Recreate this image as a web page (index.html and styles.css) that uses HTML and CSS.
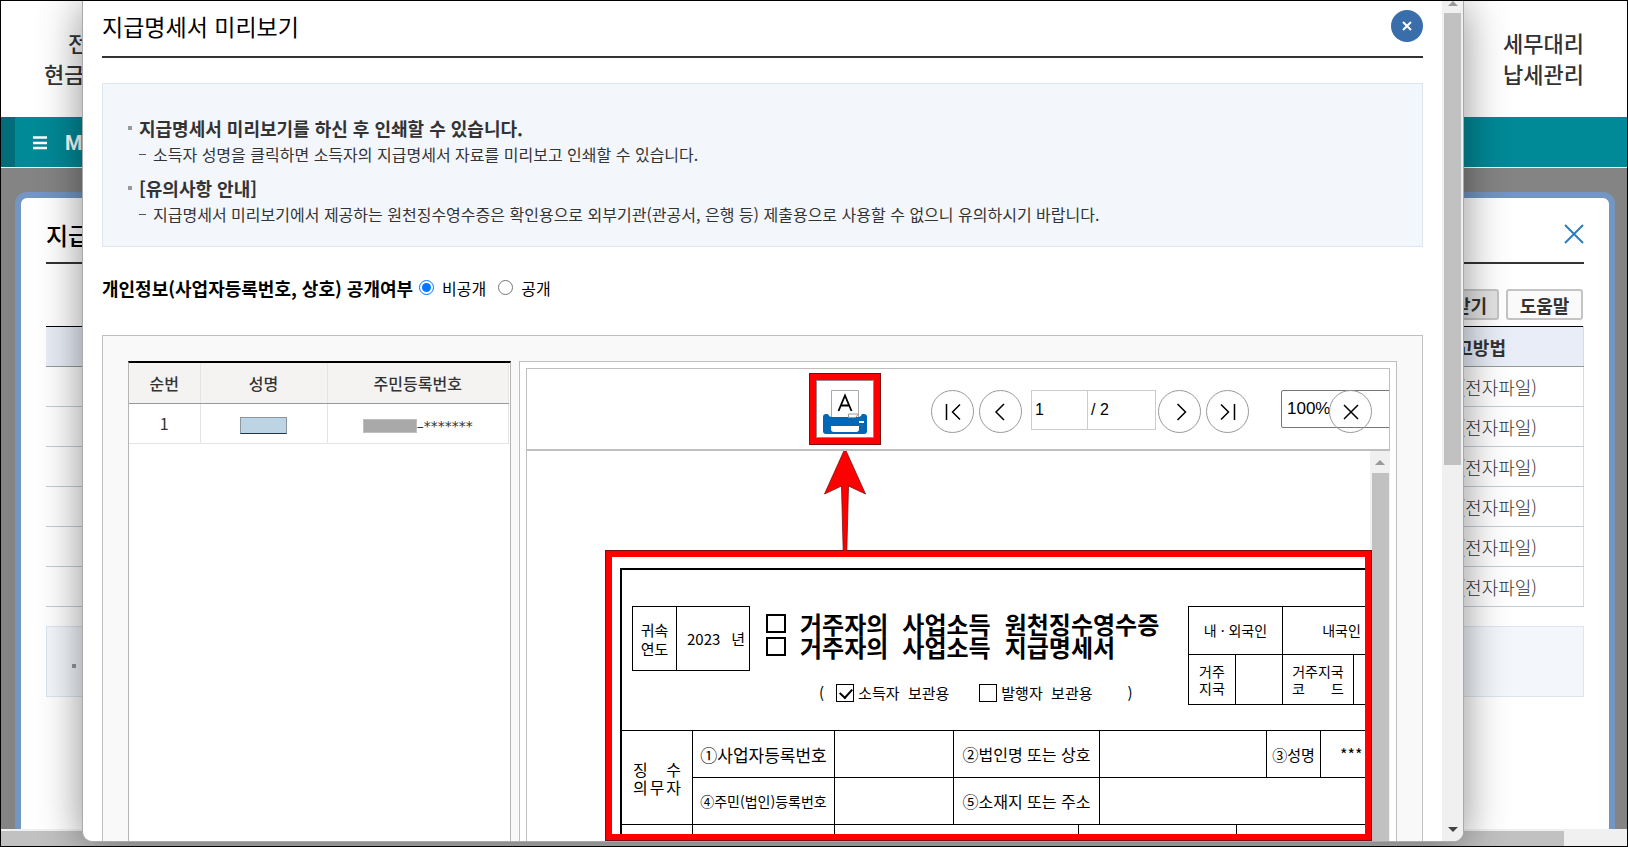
FILE: index.html
```html
<!DOCTYPE html>
<html lang="ko">
<head>
<meta charset="utf-8">
<title>지급명세서 미리보기</title>
<link rel="stylesheet" href="styles.css">
</head>
<body>
<div class="page">
  <header class="site-nav">
    <div class="nav-item nav-left"><span class="nav-first">전</span><span>현금</span></div>
    <div class="nav-item nav-right"><span>세무대리</span><span>납세관리</span></div>
  </header>
  <div class="my-bar">
    <svg class="menu-icon" width="14" height="14" viewBox="0 0 14 14"><path d="M0 1.5h14M0 7h14M0 12h14" stroke="#fff" stroke-width="2.4"/></svg>
    <span>My</span>
  </div>
  <main class="backdrop">
    <section class="back-panel">
      <div class="back-head">
        <h2>지급</h2>
        <button class="back-close" aria-label="닫기"><svg width="20" height="20" viewBox="0 0 20 20"><path d="M1 1l18 18M19 1L1 19" stroke="#2a7cc0" stroke-width="2"/></svg></button>
      </div>
      <div class="back-actions">
        <button class="back-btn pressed">받기</button>
        <button class="back-btn">도움말</button>
      </div>
      <table class="back-table">
        <thead><tr><th>신고방법</th></tr></thead>
        <tbody>
          <tr><td>(전자파일)</td></tr>
          <tr><td>(전자파일)</td></tr>
          <tr><td>(전자파일)</td></tr>
          <tr><td>(전자파일)</td></tr>
          <tr><td>(전자파일)</td></tr>
          <tr><td>(전자파일)</td></tr>
        </tbody>
      </table>
      <div class="back-note"><i class="bullet"></i></div>
    </section>
  </main>
  <div class="page-scroll"><div class="page-thumb"></div></div>

  <div class="modal" role="dialog" aria-labelledby="modal-title">
    <div class="modal-body">
      <div class="modal-head">
        <h1 id="modal-title">지급명세서 미리보기</h1>
        <button class="modal-close" aria-label="닫기"><svg width="10" height="10" viewBox="0 0 10 10"><path d="M1 1l8 8M9 1L1 9" stroke="#fff" stroke-width="2"/></svg></button>
      </div>
      <ul class="info">
        <li>
          <strong><i class="bullet"></i>지급명세서 미리보기를 하신 후 인쇄할 수 있습니다.</strong>
          <p><i class="dash"></i>소득자 성명을 클릭하면 소득자의 지급명세서 자료를 미리보고 인쇄할 수 있습니다.</p>
        </li>
        <li>
          <strong><i class="bullet"></i>[유의사항 안내]</strong>
          <p><i class="dash"></i>지급명세서 미리보기에서 제공하는 원천징수영수증은 확인용으로 외부기관(관공서, 은행 등) 제출용으로 사용할 수 없으니 유의하시기 바랍니다.</p>
        </li>
      </ul>
      <div class="privacy" role="radiogroup" aria-labelledby="privacy-label">
        <strong id="privacy-label">개인정보(사업자등록번호, 상호) 공개여부</strong>
        <label><input type="radio" name="open" checked>비공개</label>
        <label><input type="radio" name="open">공개</label>
      </div>
      <div class="panel">
        <div class="people">
          <table class="people-table">
            <colgroup><col class="c-no"><col class="c-name"><col></colgroup>
            <thead><tr><th>순번</th><th>성명</th><th>주민등록번호</th></tr></thead>
            <tbody><tr><td>1</td><td><i class="mask-name"></i></td><td><i class="mask-id"></i><span class="stars">–*******</span></td></tr></tbody>
          </table>
        </div>
        <div class="viewer">
          <div class="toolbar">
            <button class="print" aria-label="인쇄">
              <svg width="44" height="44" viewBox="0 0 44 44">
                <path d="M8.500 28V.5h27V28" fill="#fff" stroke="#aaa"/>
                <path d="M0 27q0-3 3-3h2q1 3 4 3h26q3 0 4-3h2q3 0 3 3v14q0 3-3 3H3q-3 0-3-3z" fill="#0068b7"/>
                <path d="M25.500 27.500v-3.500h10l-3 3.500z" fill="#fff" stroke="#999"/>
                <path d="M8 36h28v3q0 3-3 3H11q-3 0-3-3z" fill="#fff"/>
                <rect x="36" y="31" width="5" height="2" fill="#fff"/>
                <path d="M15.500 21L22 5.500 28.500 21M17.800 15.500h8.400" fill="none" stroke="#000" stroke-width="1.800"/>
              </svg>
            </button>
            <button class="round first" aria-label="처음"><svg width="18" height="18" viewBox="0 0 18 18"><path d="M2.500 1v16M16 1.500L8.500 9l7.500 7.500"/></svg></button>
            <button class="round" aria-label="이전"><svg width="18" height="18" viewBox="0 0 18 18"><path d="M12 1L4 9l8 8"/></svg></button>
            <div class="pages">
              <input type="text" value="1" aria-label="페이지">
              <span>/ 2</span>
            </div>
            <button class="round" aria-label="다음"><svg width="18" height="18" viewBox="0 0 18 18"><path d="M6.500 1l8 8-8 8"/></svg></button>
            <button class="round" aria-label="마지막"><svg width="18" height="18" viewBox="0 0 18 18"><path d="M2 1.500L9.500 9 2 16.500M15.500 1v16"/></svg></button>
            <div class="zoom">
              <select aria-label="배율"><option>100%</option></select>
              <button class="round zoom-close" aria-label="닫기"><svg width="18" height="18" viewBox="0 0 18 18"><path d="M2 2l14 14M16 2L2 16"/></svg></button>
            </div>
          </div>
          <div class="doc-area">
            <div class="doc">
              <div class="doc-head">
                <table class="grid year">
                  <tr><td class="year-label">귀속<br>연도</td><td><div class="spread"><span>2023</span><span>년</span></div></td></tr>
                </table>
                <div class="doc-title">
                  <p class="title-line"><i class="square"></i><span>거주자의</span><span>사업소득</span><span>원천징수영수증</span></p>
                  <p class="title-line"><i class="square"></i><span>거주자의</span><span>사업소득</span><span>지급명세서</span></p>
                  <div class="keep">
                    <span>(</span>
                    <label><input type="checkbox" checked>소득자  보관용</label>
                    <label class="issuer"><input type="checkbox">발행자  보관용</label>
                    <span class="close-paren">)</span>
                  </div>
                </div>
                <table class="grid country">
                  <colgroup><col class="w47"><col class="w47"><col class="w71"><col class="w47"></colgroup>
                  <tr class="r48"><td colspan="2">내 · 외국인</td><td colspan="2" class="shift">내국인</td></tr>
                  <tr><td>거주<br>지국</td><td></td><td><div>거주지국</div><div class="spread code"><span>코</span><span>드</span></div></td><td></td></tr>
                </table>
              </div>
              <table class="grid payer">
                <colgroup><col class="p1"><col class="p2"><col class="p3"><col class="p4"><col class="p5"><col class="p6"><col class="p7"></colgroup>
                <tr><th rowspan="2"><div class="spread"><span>징</span><span>수</span></div><div class="spread"><span>의</span><span>무</span><span>자</span></div></th><td class="big">①사업자등록번호</td><td></td><td>②법인명 또는 상호</td><td></td><td class="name">③성명</td><td class="left">***</td></tr>
                <tr><td class="small">④주민(법인)등록번호</td><td></td><td>⑤소재지 또는 주소</td><td colspan="3"></td></tr>
              </table>
              <table class="grid payee">
                <colgroup><col class="p1"><col class="p2"><col class="q3"><col class="q4"><col></colgroup>
                <tr><td></td><td></td><td></td><td></td><td></td></tr>
              </table>
            </div>
            <div class="doc-scroll"><i class="arrow-up"></i><div class="doc-thumb"></div></div>
            <div class="red-frame"></div>
            <svg class="red-arrow" width="42" height="103" viewBox="0 0 42 103"><path d="M21 .5L41.500 46 24.500 38 22.800 103h-3.600L17.500 38 .5 46z" fill="#f00" stroke="#7a1010" stroke-width=".8"/></svg>
          </div>
        </div>
      </div>
    </div>
    <div class="modal-scroll"><i class="arrow-up"></i><div class="modal-thumb"></div><i class="arrow-down"></i></div>
  </div>
</div>
</body>
</html>
```

FILE: styles.css
```css
* { box-sizing: border-box; }
body {
  margin: 0;
  font-family: "Noto Sans CJK KR", sans-serif;
  font-size: 16px;
  color: #333;
}
h1, h2, p, ul { margin: 0; padding: 0; }
ul { list-style: none; }
i { display: inline-block; flex: none; }
button { padding: 0; font-family: inherit; }
table { border-collapse: collapse; table-layout: fixed; }
svg { display: block; flex: none; }

.page {
  position: relative;
  display: flex;
  flex-direction: column;
  height: 100vh;
  overflow: hidden;
  border: 1px solid #000;
  background: #fff;
}

/* Site header */
.site-nav {
  display: flex;
  justify-content: space-between;
  flex: none;
  height: 116px;
  padding: 26px 43px 0;
  font-size: 22px;
  font-weight: 500;
  line-height: 31px;
}
.nav-item { display: flex; flex-direction: column; }
.nav-first { padding-left: 24px; }
.my-bar {
  display: flex;
  align-items: center;
  gap: 18px;
  flex: none;
  height: 50px;
  padding: 2px 0 0 18px;
  border-left: 14px solid #006d79;
  background: #008996;
  color: #fff;
  font: bold 20px Roboto, sans-serif;
}
.backdrop {
  flex: 1;
  display: flex;
  min-height: 0;
  margin-top: 1px;
  padding: 24px 12px 0 14px;
  background: #848484;
}
.back-panel {
  flex: 1;
  padding: 0 25px;
  border: 6px solid #7396c2;
  border-bottom: 0;
  border-radius: 12px 12px 0 0;
  background: #fff;
}
.back-head {
  display: flex;
  align-items: center;
  justify-content: space-between;
  height: 66px;
  padding-top: 8px;
  border-bottom: 2px solid #333;
}
.back-head h2 { font-size: 24px; font-weight: 500; color: #000; }
.back-close { border: 0; background: none; }
.back-actions {
  display: flex;
  justify-content: flex-end;
  gap: 7px;
  padding: 25px 1px 6px 0;
}
.back-btn {
  width: 77px;
  height: 31px;
  border: 2px solid #c4c4c4;
  border-radius: 3px;
  background: #fafafa;
  color: #333;
  font-size: 18px;
  font-weight: bold;
  line-height: 24px;
}
.pressed { padding-left: 20px; background: #e3e3e3; }
.back-table { width: 100%; border-top: 1px solid #000; }
.back-table th, .back-table td {
  height: 40px;
  padding: 0 46px 0 0;
  border-bottom: 1px solid #c3cbd9;
  border-right: 1px solid #d5dbe3;
  text-align: right;
  font-size: 18px;
  font-weight: 300;
  line-height: 24px;
}
.back-table th { padding-right: 77px; background: #e8edf7; border-bottom-color: #999; font-weight: bold; }
.back-note {
  height: 71px;
  margin-top: 19px;
  padding: 22px 25px;
  border: 1px solid #dbe5ef;
  background: #f3f7fc;
}
.bullet { width: 4px; height: 4px; background: #999; }
.page-scroll {
  flex: none;
  height: 17px;
  padding-top: 2px;
  background: #f0f0f0;
}
.page-thumb { height: 15px; margin-right: 63px; background: #c1c1c1; }

/* Modal window */
.modal {
  position: absolute;
  top: 0;
  right: 163px;
  bottom: 4px;
  left: 81px;
  display: flex;
  overflow: hidden;
  border: 1px solid #aaa;
  border-top: 0;
  border-radius: 0 0 10px 10px;
  background: #fff;
  box-shadow: 0 4px 44px rgba(0, 0, 0, .45);
}
.modal-body {
  flex: 1;
  display: flex;
  flex-direction: column;
  min-width: 0;
  padding: 0 19px;
}
.modal-head {
  display: flex;
  align-items: center;
  justify-content: space-between;
  flex: none;
  height: 57px;
  padding-bottom: 6px;
  border-bottom: 2px solid #333;
}
.modal-head h1 { font-size: 23px; font-weight: 400; color: #000; }
.modal-close {
  display: grid;
  place-items: center;
  width: 32px;
  height: 32px;
  border: 0;
  border-radius: 50%;
  background: #3a6eab;
}
.info {
  display: flex;
  flex-direction: column;
  gap: 8px;
  flex: none;
  margin-top: 25px;
  padding: 31px 25px 19px;
  border: 1px solid #dfe6ee;
  background: #f3f7fc;
  line-height: 26px;
  white-space: nowrap;
}
.info strong { display: flex; align-items: center; gap: 7px; font-size: 18px; }
.info p { display: flex; align-items: center; gap: 7px; padding-left: 11px; font-size: 16px; font-weight: 400; }
.dash { width: 7px; height: 1px; background: #555; }
.privacy {
  display: flex;
  align-items: center;
  flex: none;
  height: 88px;
  padding-bottom: 7px;
  color: #000;
}
.privacy strong { margin-right: 6px; font-size: 18px; }
.privacy label { display: flex; align-items: center; gap: 8px; margin-right: 12px; }
.privacy input { width: 15px; height: 15px; margin: 0; accent-color: #0075ff; }

.panel {
  flex: 1;
  display: flex;
  gap: 8px;
  min-height: 0;
  padding: 25px 25px 0;
  border: 1px solid #bfbfbf;
  border-bottom: 0;
  background: #f9f9f9;
}
.people {
  flex: none;
  width: 383px;
  padding-right: 1px;
  border: 1px solid #b5b5b5;
  border-top: 2px solid #000;
  border-bottom: 0;
  background: #fff;
}
.people-table { width: 100%; }
.c-no { width: 71px; }
.c-name { width: 127px; }
.people-table th, .people-table td {
  height: 40px;
  padding: 0;
  border-right: 1px solid #e4e4e4;
  border-bottom: 1px solid #e4e4e4;
  text-align: center;
  font-size: 16px;
  font-weight: 400;
}
.people-table th { border-bottom-color: #999; background: #f4f3f1; font-weight: 500; }
.people-table i { vertical-align: middle; }
.mask-name { width: 47px; height: 17px; border: 1px solid #8b979e; border-bottom-color: #234; background: #bcd4e4; }
.mask-id { width: 54px; height: 14px; border: 1px solid #c0c0c0; background: #a9a9a9; }
.stars { font: 14px/16px "DejaVu Sans", sans-serif; vertical-align: middle; }

/* Document viewer */
.viewer {
  flex: 1;
  display: flex;
  flex-direction: column;
  min-width: 0;
  padding: 6px 6px 0;
  border: 1px solid #bfbfbf;
  border-bottom: 0;
  background: #fff;
}
.toolbar {
  display: flex;
  align-items: flex-start;
  gap: 5px;
  flex: none;
  height: 83px;
  padding: 21px 0 0 282px;
  overflow: hidden;
  border: 1px solid #bfbfbf;
  border-bottom-width: 2px;
}
.print {
  display: grid;
  place-items: center;
  flex: none;
  width: 72px;
  height: 72px;
  margin-top: -17px;
  padding-top: 6px;
  border: 7px solid #f00;
  outline: 1px solid #7a1010;
  outline-offset: -1px;
  background: #fff;
  box-shadow: inset 0 0 0 1px #988;
}
.round {
  display: grid;
  place-items: center;
  flex: none;
  width: 43px;
  height: 43px;
  border: 1px solid #999;
  border-radius: 50%;
  background: none;
}
.round path { fill: none; stroke: #000; stroke-width: 1.500; }
.first { margin-left: 45px; }
.pages {
  display: flex;
  flex: none;
  width: 125px;
  height: 40px;
  margin: 0 -3px 0 4px;
  border: 1px solid #ccc;
  color: #000;
  font: 16px/38px "Liberation Sans", sans-serif;
}
.pages input {
  width: 56px;
  padding: 0 3px;
  border: 0;
  border-right: 1px solid #ccc;
  font: inherit;
}
.pages span { padding-left: 3px; }
.zoom { position: relative; flex: none; margin-left: 27px; }
.zoom select {
  width: 150px;
  height: 38px;
  padding: 0 5px 2px;
  appearance: none;
  border: 1px solid #767676;
  border-radius: 2px;
  background: #fff;
  color: #000;
  font: 17px "Liberation Sans", sans-serif;
}
.zoom-close { position: absolute; top: 0; left: 48px; }

.doc-area {
  position: relative;
  flex: 1;
  display: flex;
  min-height: 0;
  padding: 117px 0 0 93px;
  overflow: hidden;
  border-left: 1px solid #bfbfbf;
}
.doc {
  flex: none;
  width: 900px;
  border: 2px solid #000;
  color: #000;
}
.doc-head { display: flex; height: 160px; padding: 36px 0 0 10px; }
.grid td, .grid th { padding: 0; border: 1px solid #000; text-align: center; font-weight: 400; }
.year { width: 118px; height: 65px; font-size: 15px; line-height: 19px; }
.year-label { width: 44px; }
.year .spread { padding: 0 4px 0 10px; }
.spread { display: flex; justify-content: space-between; }
.doc-title { flex: none; width: 438px; padding: 6px 0 0 16px; }
.title-line { display: flex; align-items: center; gap: 14px; font-size: 24px; font-weight: bold; line-height: 23px; white-space: nowrap; }
.square { width: 20px; height: 19px; border: 2px solid #000; }
.keep { display: flex; align-items: center; margin-top: 25px; padding-left: 53px; font-size: 15px; line-height: 19px; white-space: pre; }
.keep label { display: flex; align-items: center; gap: 4px; margin-left: 12px; }
.keep .issuer { margin-left: 30px; }
.close-paren { margin-left: 35px; }
.keep input {
  appearance: none;
  width: 18px;
  height: 18px;
  margin: 0;
  border: 1px solid #000;
}
.keep input:checked::before {
  content: "";
  display: block;
  width: 6px;
  height: 10px;
  margin: 1px 0 0 5px;
  border: solid #000;
  border-width: 0 2px 2px 0;
  transform: rotate(42deg);
}
.country { width: 213px; height: 99px; font-size: 14px; line-height: 17px; }
.w47 { width: 47px; }
.w71 { width: 71px; }
.r48 { height: 48px; }
.code { padding: 0 9px; }
.payer, .payee { width: 897px; margin-left: -1px; }
.payer tr { height: 47px; }
.p1 { width: 71px; }
.p2 { width: 142px; }
.p3 { width: 119px; }
.p4 { width: 146px; }
.p5 { width: 167px; }
.p6 { width: 54px; }
.payer th { padding: 0 11px; font-size: 16px; line-height: 18px; }
.payer .big { font-size: 17px; }
.payer .small { font-size: 14px; }
.payer .name { font-size: 15px; }
.payer td.left { padding-left: 19px; text-align: left; }
.payee { margin-top: -1px; }
.payee tr { height: 60px; }
.q3 { width: 244px; }
.q4 { width: 158px; }
.doc-scroll {
  position: absolute;
  top: 0;
  right: 0;
  bottom: 0;
  display: flex;
  flex-direction: column;
  align-items: center;
  gap: 8px;
  width: 20px;
  padding-top: 9px;
  background: #f0f0f0;
}
.arrow-up { border: 5px solid transparent; border-top: 0; border-bottom-color: #999; }
.arrow-down { border: 5px solid transparent; border-bottom: 0; border-top-color: #444; }
.doc-thumb { flex: 1; width: 17px; background: #c1c1c1; }

/* Callouts drawn over the document */
.red-frame {
  position: absolute;
  top: 99px;
  right: 18px;
  bottom: 0;
  left: 78px;
  border: 7px solid #f00;
  outline: 1px solid #7a1010;
  outline-offset: -1px;
}
.red-arrow { position: absolute; top: -3px; left: 297px; }

.modal-scroll {
  display: flex;
  flex-direction: column;
  align-items: center;
  gap: 7px;
  flex: none;
  width: 21px;
  padding-bottom: 9px;
  background: #f0f0f0;
}
.modal-thumb { width: 17px; height: 452px; background: #c1c1c1; }
.modal-scroll .arrow-down { margin-top: auto; }
```
